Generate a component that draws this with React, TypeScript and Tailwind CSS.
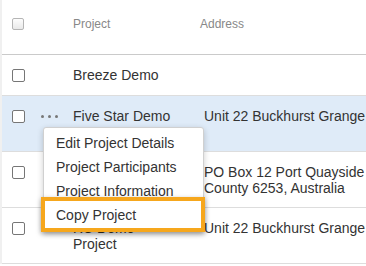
import React from "react";

function Box({ header = false }: { header?: boolean }) {
  return header ? (
    <div className="h-[12px] w-[12px] rounded-[2px] border border-[#b5b5b5] bg-gradient-to-b from-[#fdfdfd] to-[#e9e9e9]" />
  ) : (
    <div className="h-[13px] w-[13px] rounded-[2px] border border-[#767676] bg-white" />
  );
}

function Dots() {
  return (
    <div className="flex h-[16px] items-center gap-[4px] pl-[5px] pt-[1px]">
      <span className="h-[3px] w-[3px] rounded-full bg-[#777]" />
      <span className="h-[3px] w-[3px] rounded-full bg-[#777]" />
      <span className="h-[3px] w-[3px] rounded-full bg-[#777]" />
    </div>
  );
}

type Row = {
  project: string[];
  address: string[];
  h: string;
  active?: boolean;
};

const rows: Row[] = [
  { project: ["Breeze Demo"], address: [""], h: "h-[41px]" },
  { project: ["Five Star Demo"], address: ["Unit 22 Buckhurst Grange"], h: "h-[56px]", active: true },
  { project: [""], address: ["PO Box 12 Port Quayside", "County 6253, Australia"], h: "h-[56px]" },
  { project: ["RC Demo", "Project"], address: ["Unit 22 Buckhurst Grange"], h: "h-[56px]" },
];

export default function App() {
  return (
    <div
      className="relative h-[266px] w-[366px] overflow-hidden bg-white text-[14px] leading-[16px] text-[#333]"
      style={{ fontFamily: '"Liberation Sans", Arial, sans-serif' }}
    >
      <div className="border-l-2 border-[#f0f0f0]">
        <div className="grid h-[55px] grid-cols-[34px_37px_127px_1fr] border-b border-[#cacaca] pt-[16px] text-[12px] text-[#888]">
          <div className="pl-[10px] pt-[2px]">
            <Box header />
          </div>
          <div />
          <div>Project</div>
          <div>Address</div>
        </div>
        {rows.map((r, i) => (
          <div
            key={i}
            className={`grid grid-cols-[34px_37px_127px_1fr] border-b border-[#dddddd] pt-[12px] ${r.h} ${
              r.active ? "bg-[#dfebf8]" : "bg-white"
            }`}
          >
            <div className="pl-[10px] pt-[2px]">
              <Box />
            </div>
            <div>{r.active ? <Dots /> : null}</div>
            <div>
              {r.project.map((l, j) => (
                <div key={j} className="whitespace-nowrap">
                  {l}
                </div>
              ))}
            </div>
            <div className="overflow-hidden pl-[4px]">
              {r.address.map((l, j) => (
                <div key={j} className="whitespace-nowrap">
                  {l}
                </div>
              ))}
            </div>
          </div>
        ))}
      </div>

      <div className="absolute left-[43px] top-[127px] w-[161px] rounded-[3px] border border-[#d0d0d0] bg-white py-[3px] shadow-[0_2px_6px_rgba(0,0,0,0.2)]">
        {["Edit Project Details", "Project Participants", "Project Information", "Copy Project"].map((t) => (
          <div key={t} className="flex h-[24px] items-center whitespace-nowrap pl-[12px]">
            {t}
          </div>
        ))}
      </div>

      <div className="absolute left-[41px] top-[197px] h-[35px] w-[164px] border-4 border-[#f6a71d] shadow-[0_2px_5px_rgba(0,0,0,0.35)]" />
    </div>
  );
}
